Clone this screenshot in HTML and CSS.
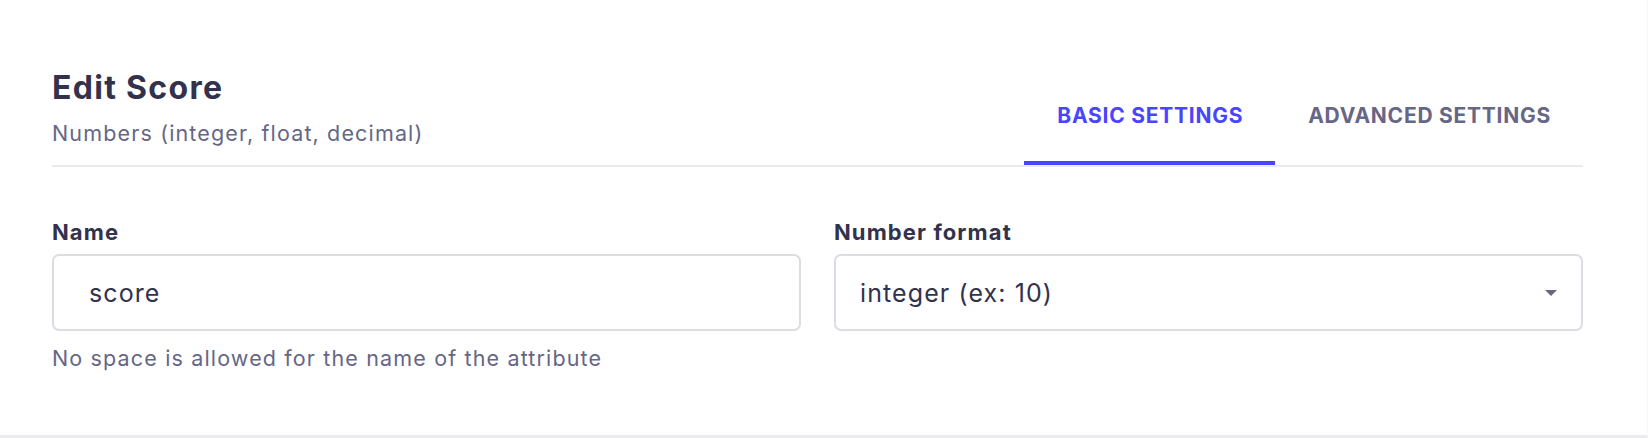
FILE: index.html
```html
<!DOCTYPE html>
<html lang="en">
<head>
<meta charset="utf-8">
<title>Edit Score</title>
<link rel="stylesheet" href="styles.css">
</head>
<body>
<div class="panel">
  <header class="header">
    <div class="heading">
      <h1 class="title">Edit Score</h1>
      <p class="subtitle">Numbers (integer, float, decimal)</p>
    </div>
    <nav class="tabs">
      <div class="tab tab-active">BASIC SETTINGS</div>
      <div class="tab">ADVANCED SETTINGS</div>
    </nav>
  </header>
  <div class="form">
    <div class="field">
      <label class="label">Name</label>
      <div class="input">score</div>
      <p class="hint">No space is allowed for the name of the attribute</p>
    </div>
    <div class="field">
      <label class="label">Number format</label>
      <div class="select">
        <span class="select-value">integer (ex: 10)</span>
        <svg class="caret" width="12" height="6" viewBox="0 0 12 6"><path d="M0 0h12L6 6z" fill="#666687"/></svg>
      </div>
    </div>
  </div>
</div>
</body>
</html>
```
FILE: styles.css
```css
* { box-sizing: border-box; }
html, body { margin: 0; padding: 0; background: #ffffff; }
body {
  font-family: Inter, "Noto Sans", "Liberation Sans", sans-serif;
  color: #32324d;
  width: 1648px;
  height: 438px;
  overflow: hidden;
}
.panel {
  height: 438px;
  padding: 69px 64px 0 52px;
  border-bottom: 3px solid #eaeaef;
  border-right: 1px solid #f9f9fb;
}
.header {
  display: flex;
  justify-content: space-between;
  align-items: flex-end;
  border-bottom: 2px solid #eaeaef;
}
.heading { padding-bottom: 20px; }
.title {
  margin: 0;
  font-size: 32px;
  line-height: 38px;
  font-weight: 700;
  letter-spacing: 1.3px;
  color: #32324d;
}
.subtitle {
  margin: 14px 0 0;
  font-size: 21.5px;
  line-height: 24px;
  letter-spacing: 1.15px;
  color: #666687;
}
.tabs { display: flex; }
.tab {
  padding: 0 32px 33px 33px;
  font-size: 21px;
  line-height: 24px;
  font-weight: 700;
  letter-spacing: 0.75px;
  color: #666687;
  border-bottom: 4px solid transparent;
  white-space: nowrap;
}
.tab-active {
  color: #4945ff;
  border-bottom-color: #4945ff;
}
.form {
  display: grid;
  grid-template-columns: 1fr 1fr;
  column-gap: 33px;
  padding-top: 53px;
}
.field { display: flex; flex-direction: column; }
.label {
  font-size: 22px;
  line-height: 24px;
  font-weight: 700;
  letter-spacing: 1.1px;
  color: #32324d;
  margin-bottom: 10px;
}
.input, .select {
  height: 77px;
  border: 2px solid #dcdce4;
  border-radius: 7px;
  display: flex;
  align-items: center;
  font-size: 25px;
  letter-spacing: 1.1px;
  color: #32324d;
}
.input { padding-left: 35px; }
.select {
  padding: 0 24px 0 24px;
  justify-content: space-between;
}
.caret { display: block; }
.hint {
  margin: 15px 0 0;
  font-size: 21.5px;
  line-height: 24px;
  letter-spacing: 1.15px;
  color: #666687;
}
```
